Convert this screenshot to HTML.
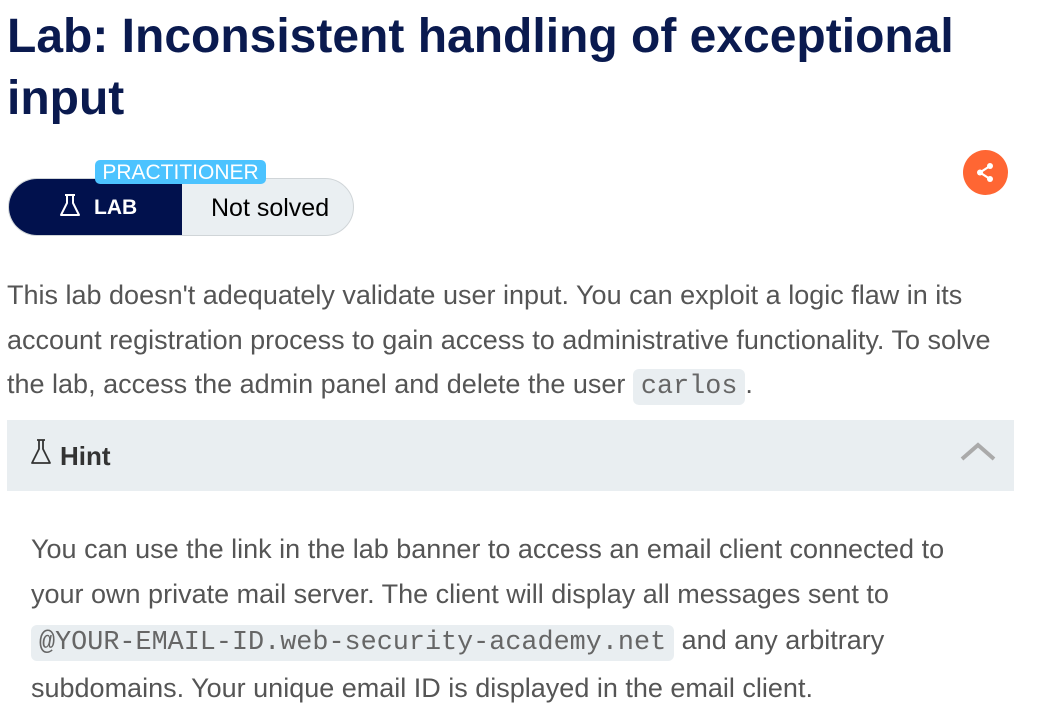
<!DOCTYPE html>
<html><head><meta charset="utf-8"><style>
body{margin:0;background:#fff;font-family:"Liberation Sans",Arial,sans-serif;width:1046px;height:705px;overflow:hidden;position:relative}
.abs{position:absolute}
h1{position:absolute;left:7px;top:6px;margin:0;font-size:48px;line-height:62px;color:#0a1a4f;font-weight:bold;width:1030px}
p{margin:0;color:#555;font-size:27px;white-space:nowrap}
code{font-family:"Liberation Mono",monospace;background:#e9eef1;border-radius:6px;padding:3px 8px;color:#666;font-size:26.8px;font-weight:300}
</style></head><body>
<h1>Lab: Inconsistent handling of exceptional input</h1>
<div class="abs" style="left:8px;top:178px;width:346px;height:58px;border-radius:29px;background:#eaeff2;border:1px solid #d0d5d8;box-sizing:border-box;overflow:hidden">
 <div class="abs" style="left:0;top:0;width:173px;height:58px;background:#01114d"></div>
 <svg class="abs" style="left:50px;top:14px" width="22" height="26" viewBox="0 0 22 26"><path d="M6 2h10M8 2v8L2 22h18L14 10V2" fill="none" stroke="#fff" stroke-width="2" stroke-linejoin="round"/></svg>
 <div class="abs" style="left:85px;top:17px;color:#fff;font-weight:bold;font-size:21px">LAB</div>
 <div class="abs" style="left:202px;top:15px;color:#000;font-size:25px">Not solved</div>
</div>
<div class="abs" style="left:95px;top:160px;width:171px;height:24px;background:#4cc3ff;border-radius:5px;color:#fff;font-size:21px;line-height:25px;text-align:center">PRACTITIONER</div>
<div class="abs" style="left:963px;top:150px;width:45px;height:45px;border-radius:50%;background:#ff6633">
 <svg class="abs" style="left:11px;top:11px" width="23" height="23" viewBox="0 0 23 23"><path d="M16 5L6 11.5L16 18" stroke="#fff" stroke-width="2.2" fill="none"/><circle cx="16" cy="5" r="3" fill="#fff"/><circle cx="6" cy="11.5" r="3" fill="#fff"/><circle cx="16" cy="18" r="3" fill="#fff"/></svg>
</div>
<p class="abs" style="left:7px;top:273px;line-height:44.5px">This lab doesn't adequately validate user input. You can exploit a logic flaw in its<br>account registration process to gain access to administrative functionality. To solve<br>the lab, access the admin panel and delete the user <code>carlos</code>.</p>
<div class="abs" style="left:7px;top:420px;width:1007px;height:71px;background:#e9eef1">
 <svg class="abs" style="left:23px;top:18px" width="22" height="27" viewBox="0 0 22 27"><path d="M7 2h8M9 2v9L2 25h18L13 11V2" fill="none" stroke="#333" stroke-width="1.8" stroke-linejoin="round"/></svg>
 <div class="abs" style="left:53px;top:21px;font-weight:bold;font-size:26px;color:#333">Hint</div>
 <svg class="abs" style="left:953px;top:22px" width="36" height="20" viewBox="0 0 36 20"><path d="M2 17L18 3L34 17" stroke="#aaa" stroke-width="4" fill="none"/></svg>
</div>
<p class="abs" style="left:31px;top:527px;line-height:45.3px">You can use the link in the lab banner to access an email client connected to<br>your own private mail server. The client will display all messages sent to<br><code>@YOUR-EMAIL-ID.web-security-academy.net</code> and any arbitrary<br>subdomains. Your unique email ID is displayed in the email client.</p>
</body></html>
